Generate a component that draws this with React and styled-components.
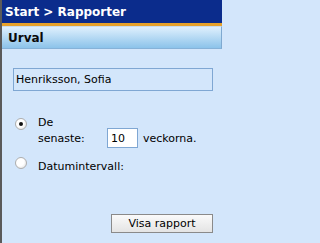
import React, { useState } from 'react';
import styled, { createGlobalStyle } from 'styled-components';

const GlobalStyle = createGlobalStyle`
  html, body {
    margin: 0;
    padding: 0;
    background: #d3e6fb;
  }
  body {
    font-family: Tahoma, "DejaVu Sans", Verdana, sans-serif;
    font-size: 11px;
    color: #000;
    -webkit-font-smoothing: none;
  }
`;

const Frame = styled.div`
  width: 222px;
  height: 243px;
  display: flex;
  flex-direction: column;
  border-left: 2px solid #5a5a5a;
  box-sizing: border-box;
  background: #d3e6fb;
`;

const TopBar = styled.div`
  height: 23px;
  background: #0b2c8c;
  color: #fff;
  font-weight: bold;
  font-size: 12px;
  padding-left: 3px;
  display: flex;
  align-items: center;
  border-bottom: 3px solid #e6a12a;
`;

const SectionHeader = styled.div`
  height: 21px;
  border-top: 1px solid #c9dcee;
  background: linear-gradient(#dff0fd, #8cc3ea);
  border-right: 1px solid #7fa9d0;
  border-bottom: 1px solid #86b2d8;
  font-weight: bold;
  font-size: 12px;
  color: #0a0a0a;
  padding-left: 6px;
  display: flex;
  align-items: center;
`;

const Body = styled.div`
  flex: 1;
  padding: 19px 9px 0 11px;
  display: flex;
  flex-direction: column;
`;

const NameBox = styled.div`
  height: 21px;
  border: 1px solid #7fa7d3;
  padding-left: 2px;
  display: flex;
  align-items: center;
  font-size: 11px;
`;

const Options = styled.div`
  margin-top: 24px;
  padding-left: 2px;
  display: flex;
  flex-direction: column;
  gap: 12px;
`;

const OptionRow = styled.label`
  display: flex;
  align-items: flex-start;
  line-height: 16px;
`;

const Radio = styled.span`
  flex: none;
  width: 12px;
  height: 12px;
  margin-top: ${({ $offset }) => $offset || 0}px;
  margin-right: 11px;
  border-radius: 50%;
  background: radial-gradient(circle at 40% 40%, #fff 45%, #d8d8d8 100%);
  border: 1px solid #aeaeae;
  box-sizing: border-box;
  display: flex;
  align-items: center;
  justify-content: center;

  &::after {
    content: '';
    width: 4px;
    height: 4px;
    border-radius: 50%;
    background: ${({ $checked }) => ($checked ? '#111' : 'transparent')};
  }
`;

const WeeksText = styled.div`
  display: flex;
  align-items: flex-end;
`;

const Stack = styled.span`
  display: flex;
  flex-direction: column;
  width: 69px;
`;

const NumberInput = styled.input`
  width: 31px;
  height: 20px;
  margin-bottom: -1px;
  box-sizing: border-box;
  border: 1px solid #7fa7d3;
  background: #fff;
  font-family: inherit;
  font-size: 11px;
  padding: 0 3px;
  outline: none;
`;

const Unit = styled.span`
  padding-left: 5px;
`;

const Footer = styled.div`
  margin-top: auto;
  margin-bottom: 10px;
  display: flex;
  justify-content: flex-end;
`;

const Button = styled.button`
  width: 102px;
  height: 19px;
  font-family: inherit;
  font-size: 11px;
  background: linear-gradient(#fafafa, #e4e4e4);
  border: 1px solid #8a8a8a;
  padding: 0;
  color: #000;
`;

export default function App() {
  const [weeks, setWeeks] = useState('10');

  return (
    <>
      <GlobalStyle />
      <Frame>
        <TopBar>Start &gt; Rapporter</TopBar>
        <SectionHeader>Urval</SectionHeader>
        <Body>
          <NameBox>Henriksson, Sofia</NameBox>
          <Options>
            <OptionRow>
              <Radio $checked $offset={3} />
              <WeeksText>
                <Stack>
                  <span>De</span>
                  <span>senaste:</span>
                </Stack>
                <NumberInput value={weeks} onChange={(e) => setWeeks(e.target.value)} />
                <Unit>veckorna.</Unit>
              </WeeksText>
            </OptionRow>
            <OptionRow>
              <Radio $offset={-2} />
              <span>Datumintervall:</span>
            </OptionRow>
          </Options>
          <Footer>
            <Button>Visa rapport</Button>
          </Footer>
        </Body>
      </Frame>
    </>
  );
}
